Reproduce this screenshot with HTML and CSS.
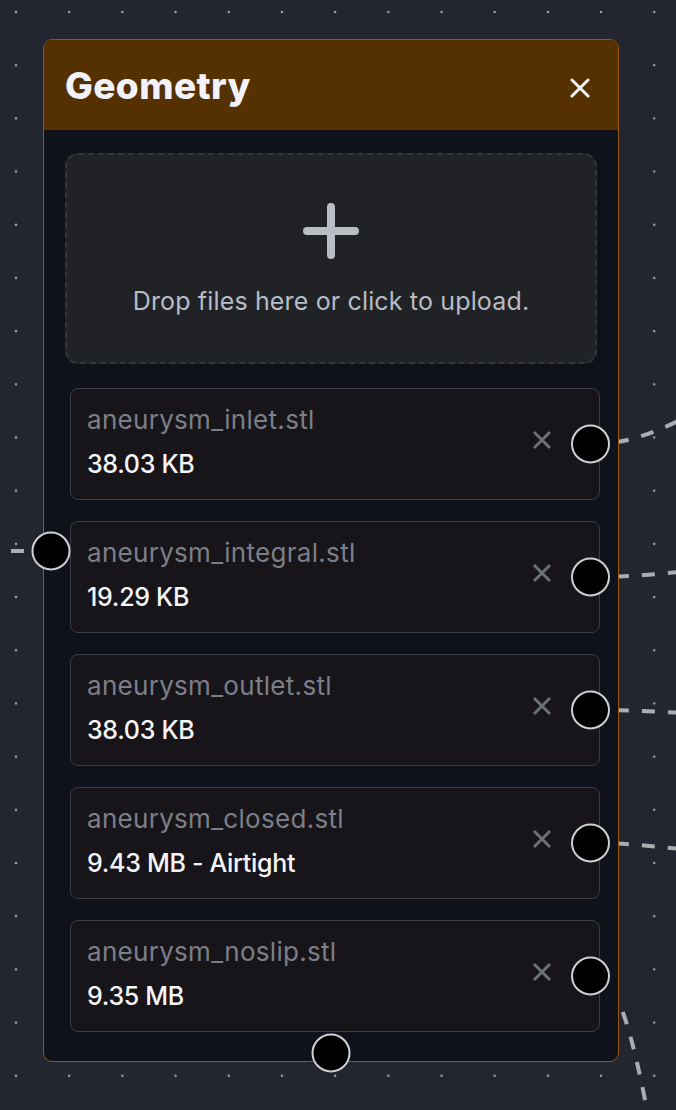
FILE: index.html
```html
<!DOCTYPE html>
<html lang="en">
<head>
<meta charset="utf-8">
<title>Geometry</title>
<link rel="stylesheet" href="styles.css">
</head>
<body>
<div class="canvas">
  <svg class="edges" width="676" height="1110" viewBox="0 0 676 1110">
    <g class="edge">
      <path d="M590 444 C 625 444, 650 436, 700 410"/>
      <path d="M590 577 C 625 577, 650 575, 700 570"/>
      <path d="M590 710 C 625 710, 650 711, 700 714"/>
      <path d="M590 843 C 625 843, 650 846, 700 851"/>
      <path d="M590 976 C 612 976, 626 1000, 649 1120"/>
      <path d="M50 551 L -30 551"/>
    </g>
  </svg>

  <section class="node">
    <header class="node-header">
      <h1 class="node-title">Geometry</h1>
      <button class="node-close" aria-label="Close">
        <svg width="20" height="20" viewBox="0 0 20 20"><path d="M2 2 L18 18 M18 2 L2 18"/></svg>
      </button>
    </header>
    <div class="node-body">
      <div class="dropzone">
        <svg class="plus" width="56" height="56" viewBox="0 0 56 56"><path d="M28 4 V52 M4 28 H52"/></svg>
        <p class="dropzone-text">Drop files here or click to upload.</p>
      </div>
      <ul class="files">
        <li class="file">
          <div class="file-info"><span class="file-name">aneurysm_inlet.stl</span><span class="file-size">38.03 KB</span></div>
          <button class="file-remove" aria-label="Remove"><svg width="20" height="20" viewBox="0 0 20 20"><path d="M2 2 L18 18 M18 2 L2 18"/></svg></button>
          <span class="handle handle-file"></span>
        </li>
        <li class="file">
          <div class="file-info"><span class="file-name">aneurysm_integral.stl</span><span class="file-size">19.29 KB</span></div>
          <button class="file-remove" aria-label="Remove"><svg width="20" height="20" viewBox="0 0 20 20"><path d="M2 2 L18 18 M18 2 L2 18"/></svg></button>
          <span class="handle handle-file"></span>
        </li>
        <li class="file">
          <div class="file-info"><span class="file-name">aneurysm_outlet.stl</span><span class="file-size">38.03 KB</span></div>
          <button class="file-remove" aria-label="Remove"><svg width="20" height="20" viewBox="0 0 20 20"><path d="M2 2 L18 18 M18 2 L2 18"/></svg></button>
          <span class="handle handle-file"></span>
        </li>
        <li class="file">
          <div class="file-info"><span class="file-name">aneurysm_closed.stl</span><span class="file-size">9.43 MB - Airtight</span></div>
          <button class="file-remove" aria-label="Remove"><svg width="20" height="20" viewBox="0 0 20 20"><path d="M2 2 L18 18 M18 2 L2 18"/></svg></button>
          <span class="handle handle-file"></span>
        </li>
        <li class="file">
          <div class="file-info"><span class="file-name">aneurysm_noslip.stl</span><span class="file-size">9.35 MB</span></div>
          <button class="file-remove" aria-label="Remove"><svg width="20" height="20" viewBox="0 0 20 20"><path d="M2 2 L18 18 M18 2 L2 18"/></svg></button>
          <span class="handle handle-file"></span>
        </li>
      </ul>
    </div>
    <span class="handle handle-left"></span>
    <span class="handle handle-bottom"></span>
  </section>
</div>
</body>
</html>
```

FILE: styles.css
```css
* { box-sizing: border-box; }

html, body {
  margin: 0;
  padding: 0;
  width: 676px;
  height: 1110px;
  overflow: hidden;
  background: #232631;
  font-family: "Inter", "Noto Sans", sans-serif;
}

.canvas {
  position: relative;
  width: 676px;
  height: 1110px;
  background-color: #232631;
  background-image: radial-gradient(circle, #a3a7b3 1.1px, transparent 1.6px);
  background-size: 53.2px 53.2px;
  background-position: -10.6px -14.6px;
  overflow: hidden;
}

.edges {
  position: absolute;
  left: 0;
  top: 0;
}

.edge path {
  fill: none;
  stroke: #acadb0;
  stroke-width: 4;
  stroke-dasharray: 13 13;
}

.node {
  position: absolute;
  left: 43px;
  top: 39px;
  width: 576px;
  height: 1023px;
  border: 1px solid #95590f;
  border-radius: 9px;
  background: #0f111b;
  display: flex;
  flex-direction: column;
}

.node-header {
  height: 90px;
  flex: none;
  background: #553000;
  border-radius: 8px 8px 0 0;
  display: flex;
  align-items: center;
  justify-content: space-between;
  padding: 0 27px 0 21px;
}

.node-title {
  margin: 0;
  font-size: 37px;
  font-weight: 800;
  color: #f1f2fb;
  letter-spacing: 0.4px;
  line-height: 1;
}

.node-close {
  background: none;
  border: 0;
  padding: 0;
  width: 22px;
  height: 22px;
  margin-top: 6px;
  display: flex;
  align-items: center;
  justify-content: center;
  cursor: pointer;
}

.node-close path {
  fill: none;
  stroke: #f1f2fb;
  stroke-width: 3;
  stroke-linecap: round;
}

.node-body {
  display: flex;
  flex-direction: column;
  padding: 23px 0 0;
}

.dropzone {
  margin: 0 21px;
  height: 211px;
  border: 2px dashed #34363e;
  border-radius: 13px;
  background: #212226;
  display: flex;
  flex-direction: column;
  align-items: center;
  justify-content: center;
  gap: 27px;
  padding-top: 2px;
}

.plus path {
  fill: none;
  stroke: #b9bdc6;
  stroke-width: 8;
  stroke-linecap: round;
}

.dropzone-text {
  margin: 0;
  font-size: 25px;
  line-height: 30px;
  color: #b8bcc4;
  letter-spacing: 0.15px;
}

.files {
  list-style: none;
  margin: 24px 0 0;
  padding: 0 18px 0 26px;
  display: flex;
  flex-direction: column;
  gap: 21px;
}

.file {
  position: relative;
  height: 112px;
  border: 1px solid #3a3d45;
  border-radius: 8px;
  background: #17151a;
  display: flex;
  align-items: center;
  padding: 0 45px 0 16px;
}

.file-info {
  flex: 1;
  display: flex;
  flex-direction: column;
  gap: 14px;
  margin-bottom: 6px;
}

.file-name {
  font-size: 26px;
  line-height: 31px;
  color: #7c7f88;
  letter-spacing: 0.3px;
}

.file-size {
  font-size: 25px;
  line-height: 30px;
  font-weight: 500;
  color: #f5f5f7;
  letter-spacing: -0.3px;
}

.file-remove {
  background: none;
  border: 0;
  padding: 0;
  width: 24px;
  height: 24px;
  display: flex;
  align-items: center;
  justify-content: center;
  margin-bottom: 8px;
  cursor: pointer;
}

.file-remove path {
  fill: none;
  stroke: #6b6f78;
  stroke-width: 3;
}

.handle {
  position: absolute;
  width: 39px;
  height: 39px;
  border-radius: 50%;
  background: #000;
  border: 2px solid #cfd0d4;
}

.handle-file {
  right: -10.5px;
  top: 50%;
  transform: translateY(-50%);
}

.handle-left {
  left: 6.5px;
  top: 50%;
  transform: translate(-50%, -50%);
}

.handle-bottom {
  left: 50%;
  bottom: 8px;
  transform: translate(-50%, 50%);
}
```
